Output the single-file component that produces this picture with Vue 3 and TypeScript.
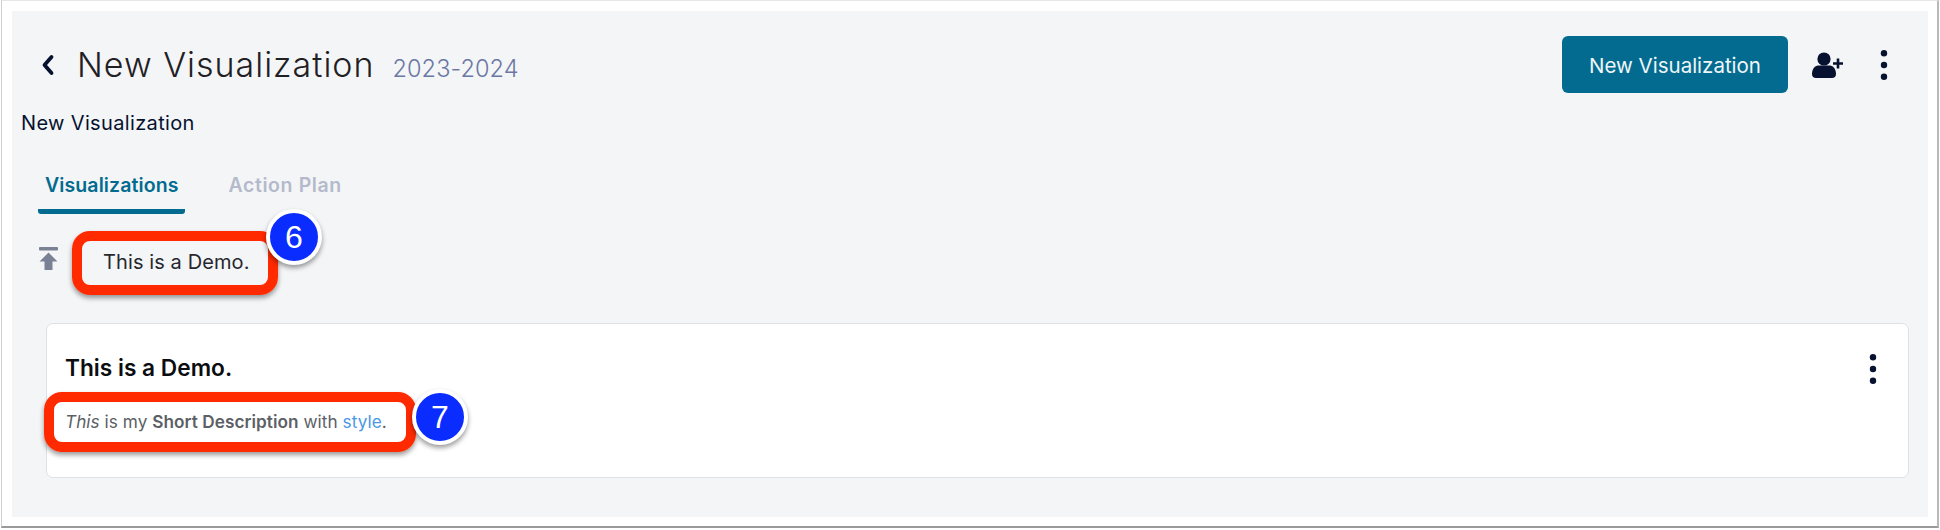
<script setup lang="ts">
const title = 'New Visualization'
const demo = 'This is a Demo.'
</script>

<template>
  <div class="frame">
    <main class="panel">
      <header class="top">
        <div class="heading">
          <svg class="back" viewBox="0 0 14 22" width="14" height="22"><path d="M10.500 3 3.500 11l7 8" fill="none" stroke="#06122f" stroke-width="3.800" stroke-linecap="round" stroke-linejoin="round"/></svg>
          <h1>{{ title }}</h1>
          <span class="year">2023-2024</span>
        </div>
        <div class="actions">
          <button class="primary">{{ title }}</button>
          <svg class="person" viewBox="0 0 32 26" width="32" height="26" fill="#06122f">
            <circle cx="12" cy="7" r="6.6"/>
            <path d="M0 22c0-6 3.5-8.5 7-8.5h10c3.500 0 7 2.500 7 8.500 0 2.500-1.500 4-4 4H4c-2.500 0-4-1.500-4-4z"/>
            <path d="M24.700 6.500h2.600v3.700H31v2.600h-3.700v3.700h-2.600v-3.700H21v-2.600h3.700z"/>
          </svg>
          <svg class="kebab" viewBox="0 0 8 30" width="8" height="30" fill="#06122f"><circle cx="4" cy="3.200" r="3.200"/><circle cx="4" cy="15" r="3.200"/><circle cx="4" cy="26.800" r="3.200"/></svg>
        </div>
      </header>
      <p class="sub">{{ title }}</p>
      <nav class="tabs">
        <a class="tab active">Visualizations</a>
        <a class="tab idle">Action Plan</a>
      </nav>
      <section class="pinned">
        <svg class="pin" viewBox="0 0 19 23" width="19" height="23" fill="#7a8194"><rect x="0" y="0" width="19" height="3.600" rx="1"/><path d="M9.500 5.500 18.500 14.500h-5V23h-8v-8.500h-5z"/></svg>
        <span class="demo">{{ demo }}</span>
        <span class="mark mark-six" />
        <span class="badge badge-six">6</span>
      </section>
      <article class="card">
        <div class="card-body">
          <h2>{{ demo }}</h2>
          <p class="desc"><em>This</em> is my <strong>Short Description</strong> with <a>style</a>.</p>
        </div>
        <svg class="kebab" viewBox="0 0 8 30" width="8" height="30" fill="#06122f"><circle cx="4" cy="3.200" r="3.200"/><circle cx="4" cy="15" r="3.200"/><circle cx="4" cy="26.800" r="3.200"/></svg>
        <span class="mark mark-seven" />
        <span class="badge badge-seven">7</span>
      </article>
    </main>
  </div>
</template>

<style>
html, body { margin: 0; background: #fff; }
</style>

<style scoped>
.frame {
  box-sizing: border-box;
  width: 1938px;
  height: 528px;
  margin-left: 1px;
  padding: 10px 9px 9px 10px;
  border: 1px solid #cfcfcf;
  border-top-color: #e6e6e6;
  border-right: 2px solid #b9b9b9;
  border-bottom: 2px solid #9a9a9a;
  font-family: Inter, "Liberation Sans", sans-serif;
}
.panel {
  box-sizing: border-box;
  height: 506px;
  background: #f4f5f7;
  padding: 25px 19px 0 7px;
  color: #06122f;
}
.top { display: flex; justify-content: space-between; align-items: flex-start; padding-right: 17px; }
.heading { display: flex; align-items: baseline; padding-left: 22px; padding-top: 7px; }
.back { align-self: center; margin-right: 22px; margin-top: 0; }
h1 { margin: 0; font-size: 34px; font-weight: 300; color: #1f2024; letter-spacing: 1px; line-height: 44px; }
.year { margin-left: 18px; font-size: 23.500px; font-weight: 300; color: #6b77a3; letter-spacing: 0.1px; }
.actions { display: flex; align-items: center; }
.primary {
  width: 226px; height: 57px;
  border: 0; border-radius: 6px;
  background: #036b8f; color: #eef6fa;
  font: 400 20.500px Inter, "Liberation Sans", sans-serif;
  padding-top: 2px;
}
.person { margin-left: 24px; }
.actions .kebab { margin-left: 36px; margin-right: 4px; }
.sub { margin: 18px 0 0 2px; font-size: 20px; line-height: 24px; letter-spacing: 0.35px; }
.tabs { display: flex; gap: 36px; margin: 37px 0 0 19px; }
.tab { padding: 0 7px 11px; font-size: 19.500px; line-height: 26px; font-weight: 600; color: #b4bacb; letter-spacing: 0.1px; }
.tab.idle { letter-spacing: 0.6px; }
.tab.active { color: #036b8f; border-bottom: 5px solid #036b8f; border-radius: 3px; }
.pinned { position: relative; display: flex; align-items: center; height: 38px; margin: 31px 0 0 20px; }
.pin { margin-bottom: 12px; }
.demo { margin-left: 45px; margin-bottom: 5px; font-size: 20px; color: #26282e; letter-spacing: 0.1px; }
.card {
  position: relative;
  display: flex;
  justify-content: space-between;
  box-sizing: border-box;
  height: 155px;
  margin: 40px 0 0 27px;
  padding: 30px 31px 0 18px;
  background: #fff;
  border: 1px solid #dfe1e6;
  border-radius: 7px;
}
h2 { margin: 0; font-size: 22.700px; line-height: 28px; font-weight: 600; color: #0c0d10; }
.desc { margin: 28px 0 0; font-size: 17.200px; line-height: 24px; color: #5c5f66; letter-spacing: 0.05px; }
.desc strong { font-weight: 600; }
.desc a { color: #4a97e8; }
.mark {
  position: absolute;
  box-sizing: border-box;
  border: 10px solid #ff2a00;
  border-radius: 18px;
  box-shadow: 0 3px 5px rgba(0, 0, 0, 0.4);
}
.mark-six { left: 33px; top: -14px; width: 206px; height: 64px; }
.mark-seven { left: -3px; top: 68px; width: 372px; height: 60px; }
.badge {
  position: absolute;
  box-sizing: border-box;
  display: flex; align-items: center; justify-content: center;
  width: 56px; height: 56px;
  border: 4px solid #fff;
  border-radius: 50%;
  background: #0a2cff;
  color: #fff;
  font: 400 32px "Liberation Sans", sans-serif;
  box-shadow: 0 3px 5px rgba(0, 0, 0, 0.4);
}
.badge-six { left: 227px; top: -36px; }
.badge-seven { left: 365px; top: 65px; }
</style>
